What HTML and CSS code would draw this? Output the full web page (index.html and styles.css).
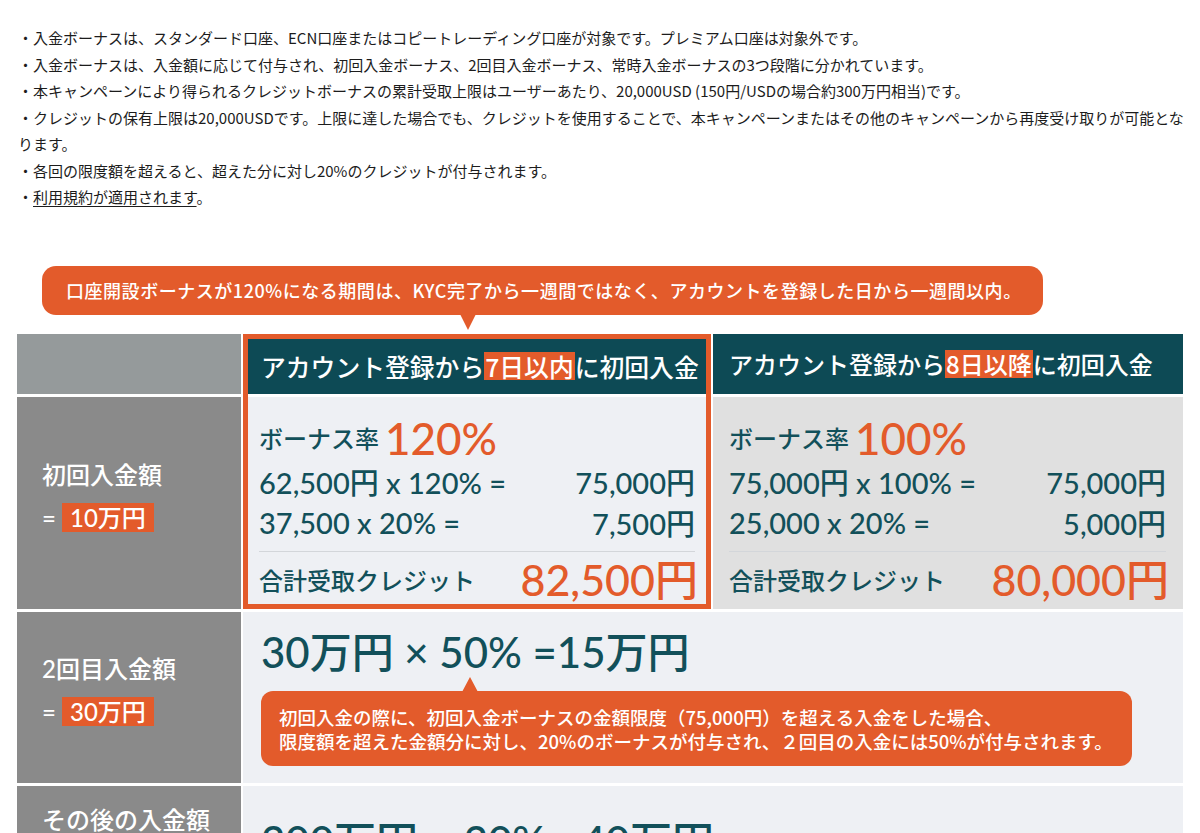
FILE: index.html
```html
<!DOCTYPE html>
<html lang="ja">
<head>
<meta charset="utf-8">
<title>入金ボーナス</title>
<link rel="stylesheet" href="styles.css">
</head>
<body>
<div class="notes">
  <p>・入金ボーナスは、スタンダード口座、ECN口座またはコピートレーディング口座が対象です。プレミアム口座は対象外です。</p>
  <p>・入金ボーナスは、入金額に応じて付与され、初回入金ボーナス、2回目入金ボーナス、常時入金ボーナスの3つ段階に分かれています。</p>
  <p>・本キャンペーンにより得られるクレジットボーナスの累計受取上限はユーザーあたり、20,000USD (150円/USDの場合約300万円相当)です。</p>
  <p>・クレジットの保有上限は20,000USDです。上限に達した場合でも、クレジットを使用することで、本キャンペーンまたはその他のキャンペーンから再度受け取りが可能となります。</p>
  <p>・各回の限度額を超えると、超えた分に対し20%のクレジットが付与されます。</p>
  <p>・<a class="terms" href="#">利用規約が適用されます</a>。</p>
</div>

<section class="info">
  <div class="callout">口座開設ボーナスが120%になる期間は、KYC完了から一週間ではなく、アカウントを登録した日から一週間以内。</div>

  <div class="grid">
    <div class="corner"></div>

    <div class="col-hl">
      <div class="th">アカウント登録から<span class="mark">7日以内</span>に初回入金</div>
      <div class="calc">
        <div class="rate">ボーナス率<span class="pct">120%</span></div>
        <div class="line"><span>62,500円 x 120% =</span><span>75,000円</span></div>
        <div class="line"><span>37,500 x 20% =</span><span>7,500円</span></div>
        <div class="divider"></div>
        <div class="total"><span>合計受取クレジット</span><span class="sum">82,500円</span></div>
      </div>
    </div>

    <div class="th th-plain">アカウント登録から<span class="mark">8日以降</span>に初回入金</div>

    <div class="label r2">
      <div>初回入金額</div>
      <div>= <span class="amt">10万円</span></div>
    </div>

    <div class="calc calc-gray">
      <div class="rate">ボーナス率<span class="pct">100%</span></div>
      <div class="line"><span>75,000円 x 100% =</span><span>75,000円</span></div>
      <div class="line"><span>25,000 x 20% =</span><span>5,000円</span></div>
      <div class="divider"></div>
      <div class="total"><span>合計受取クレジット</span><span class="sum">80,000円</span></div>
    </div>

    <div class="label r3">
      <div>2回目入金額</div>
      <div>= <span class="amt">30万円</span></div>
    </div>

    <div class="wide r3">
      <div class="big">30万円 × 50% =15万円</div>
      <div class="note">初回入金の際に、初回入金ボーナスの金額限度（75,000円）を超える入金をした場合、<br>限度額を超えた金額分に対し、20%のボーナスが付与され、２回目の入金には50%が付与されます。</div>
    </div>

    <div class="label r4">
      <div>その後の入金額</div>
      <div>= <span class="amt">200万円</span></div>
    </div>

    <div class="wide wide-center r4">
      <div class="big">200万円 × 20% =40万円</div>
    </div>
  </div>
</section>
</body>
</html>
```

FILE: styles.css
```css
html, body {
  margin: 0;
  padding: 0;
  background: #ffffff;
}

body {
  font-family: "Noto Sans CJK JP", "Noto Sans", sans-serif;
  color: #1c1c1c;
}

/* ---------- notes ---------- */
.notes {
  padding: 25px 16px 0 18px;
  font-size: 15px;
  line-height: 26.5px;
}

.notes p {
  margin: 0;
}

.terms {
  color: inherit;
  text-decoration: underline;
  text-underline-offset: 3px;
}

/* ---------- infographic ---------- */
.info {
  margin: 55px 17px 0 17px;
  width: 1166px;
  font-family: "Lato", "Noto Sans CJK JP", sans-serif;
  font-weight: 500;
}

.callout {
  position: relative;
  margin-left: 25px;
  width: 1001px;
  height: 49px;
  box-sizing: border-box;
  padding-left: 24px;
  display: flex;
  align-items: center;
  background: #e35b2b;
  color: #ffffff;
  border-radius: 14px;
  font-family: "Noto Sans CJK JP", sans-serif;
  font-size: 18px;
  letter-spacing: 0.03em;
}

.callout::after {
  content: "";
  position: absolute;
  left: 418px;
  bottom: -15px;
  border-left: 8px solid transparent;
  border-right: 8px solid transparent;
  border-top: 16px solid #e35b2b;
}

.grid {
  margin-top: 19px;
  display: grid;
  grid-template-columns: 224px 468px 470px;
  grid-template-rows: 60px 212px 171px 110px;
  column-gap: 2px;
  row-gap: 3px;
}

.corner {
  grid-column: 1;
  grid-row: 1;
  background: #959a9b;
}

.col-hl {
  grid-column: 2;
  grid-row: 1 / 3;
  border: 5px solid #e35b2b;
  display: grid;
  grid-template-rows: 55px 1fr;
  row-gap: 3px;
  background: #ffffff;
}

.th {
  background: #0d4a55;
  color: #ffffff;
  font-family: "Noto Sans CJK JP", sans-serif;
  font-size: 24.8px;
  display: flex;
  align-items: center;
  padding-left: 13px;
  white-space: nowrap;
}

.th-plain {
  grid-column: 3;
  grid-row: 1;
  padding-left: 16px;
  font-size: 24px;
}

.mark {
  background: #e35b2b;
  line-height: 28px;
  padding: 0 1px;
}

.calc {
  background: #eef0f4;
  color: #12505a;
  padding: 19px 11px 0 11px;
  display: flex;
  flex-direction: column;
}

.calc-gray {
  grid-column: 3;
  grid-row: 2;
  background: #e0e0e0;
  padding: 19px 17px 0 16px;
}

.rate {
  height: 44px;
  display: flex;
  align-items: center;
  font-family: "Noto Sans CJK JP", sans-serif;
  font-size: 24px;
}

.pct {
  font-family: "Lato", sans-serif;
  font-size: 44px;
  color: #e35b2b;
  margin-left: 6px;
  line-height: 44px;
}

.line {
  height: 41px;
  display: flex;
  justify-content: space-between;
  align-items: center;
  font-size: 29px;
  white-space: nowrap;
}

.line:nth-of-type(2) {
  margin-top: 1px;
}

.divider {
  margin-top: 8px;
  height: 1px;
  background: #d3d6da;
}

.total {
  height: 48px;
  margin-top: 4px;
  display: flex;
  justify-content: space-between;
  align-items: center;
  font-family: "Noto Sans CJK JP", sans-serif;
  font-size: 24px;
}

.sum {
  font-family: "Lato", "Noto Sans CJK JP", sans-serif;
  font-size: 43px;
  color: #e35b2b;
  line-height: 48px;
  margin-right: -3px;
}

.label {
  grid-column: 1;
  background: #8a8a8a;
  color: #ffffff;
  font-size: 24px;
  line-height: 43px;
  padding: 0 0 14px 25px;
  display: flex;
  flex-direction: column;
  justify-content: center;
}

.label.r2 { grid-row: 2; }
.label.r3 { grid-row: 3; }
.label.r4 { grid-row: 4; padding-bottom: 0; justify-content: flex-start; padding-top: 12px; }

.amt {
  background: #e35b2b;
  padding: 0 8px;
  line-height: 29px;
  display: inline-block;
}

.wide {
  grid-column: 2 / 4;
  background: #eef0f4;
  color: #12505a;
  padding: 15px 51px 0 18px;
}

.wide.r3 { grid-row: 3; }
.wide.r4 { grid-row: 4; padding-top: 30px; }

.big {
  font-size: 42px;
  line-height: 50px;
  white-space: nowrap;
}

.note {
  position: relative;
  margin-top: 14px;
  width: 871px;
  box-sizing: border-box;
  padding: 14px 18px 13px 18px;
  background: #e35b2b;
  color: #ffffff;
  border-radius: 12px;
  font-family: "Noto Sans CJK JP", sans-serif;
  font-size: 18.5px;
  line-height: 24px;
  white-space: nowrap;
}

.note::before {
  content: "";
  position: absolute;
  left: 201px;
  top: -14px;
  border-left: 8px solid transparent;
  border-right: 8px solid transparent;
  border-bottom: 15px solid #e35b2b;
}
```
